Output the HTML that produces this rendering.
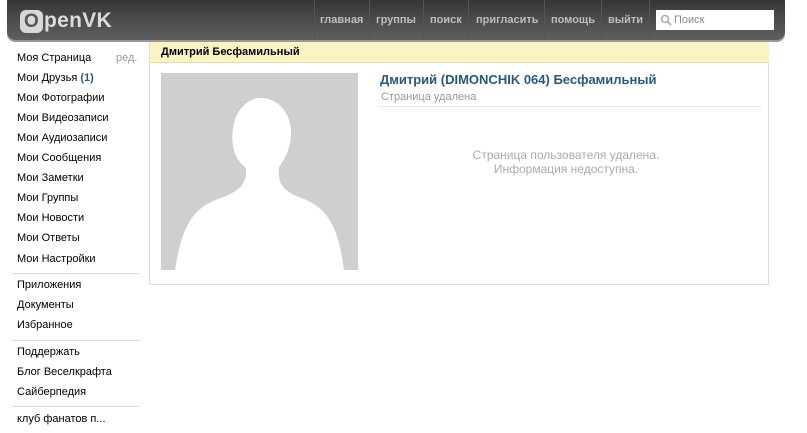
<!DOCTYPE html>
<html><head><meta charset="utf-8"><style>
body{margin:0;width:807px;height:433px;background:#fff;font-family:"Liberation Sans","DejaVu Sans",sans-serif;position:relative;overflow:hidden}
.hdr{position:absolute;left:7px;top:-5px;width:778px;height:45px;border-radius:0 0 8px 8px;background:linear-gradient(#2e2e2e,#4a4a4a 50%,#5e5e5e);box-shadow:0 2px 0 #9a9a9a}
.logo{position:absolute;left:13px;top:10px;color:#dcdcdc;font-weight:bold;font-size:21px;letter-spacing:0.3px}
.logo b{display:inline-block;background:#d8d8d8;color:#555;border-radius:6px;width:23px;height:23px;text-align:center;line-height:23px;font-size:19px;margin-right:1px}
.nav{position:absolute;top:0;height:40px;line-height:41px;font-size:11px;font-weight:bold;color:#bdbdbd}
.sep{position:absolute;top:0;width:1px;height:40px;background:#555}
.srch{position:absolute;left:656px;top:10px;width:118px;height:20px;background:#fff;font-size:11px;color:#888;line-height:20px}
.menu a{position:absolute;left:17px;font-size:11px;color:#000;text-decoration:none}
.hr{position:absolute;left:11px;width:129px;height:1px;background:#ddd}
.box{position:absolute;left:149px;top:42px;width:620px;height:243px;border:1px solid #d5dde6;border-top:none;box-sizing:border-box}
.bh{position:absolute;left:150px;top:42px;width:619px;height:21px;background:#fcf3c5;border-bottom:1px solid #e8dfa8;box-sizing:border-box;font-size:11px;font-weight:bold;padding:4px 11px}
</style></head><body>
<div class="hdr">
<div class="logo" style="top:14px"><b>O</b>penVK</div>
</div>
<div class="sep" style="left:314px"></div>
<div class="nav" style="left:320px">главная</div>
<div class="sep" style="left:369px"></div>
<div class="nav" style="left:376px">группы</div>
<div class="sep" style="left:423px"></div>
<div class="nav" style="left:430px">поиск</div>
<div class="sep" style="left:468px"></div>
<div class="nav" style="left:476px">пригласить</div>
<div class="sep" style="left:544px"></div>
<div class="nav" style="left:551px">помощь</div>
<div class="sep" style="left:601px"></div>
<div class="nav" style="left:608px">выйти</div>
<div class="sep" style="left:649px"></div>
<div class="srch"><svg width="12" height="12" style="position:absolute;left:4px;top:4px"><circle cx="5" cy="5" r="3.5" fill="none" stroke="#aaa" stroke-width="1.5"/><line x1="7.5" y1="7.5" x2="11" y2="11" stroke="#aaa" stroke-width="1.8"/></svg><span style="position:absolute;left:18px">Поиск</span></div>

<div class="menu">
<a style="top:52px">Моя Страница</a><a style="top:52px;left:116px;color:#999">ред.</a>
<a style="top:72px">Мои Друзья <span style="color:#2b587a;font-weight:bold">(1)</span></a>
<a style="top:92px">Мои Фотографии</a>
<a style="top:112px">Мои Видеозаписи</a>
<a style="top:132px">Мои Аудиозаписи</a>
<a style="top:152px">Мои Сообщения</a>
<a style="top:172px">Мои Заметки</a>
<a style="top:192px">Мои Группы</a>
<a style="top:212px">Мои Новости</a>
<a style="top:232px">Мои Ответы</a>
<a style="top:253px">Мои Настройки</a>
<div class="hr" style="top:273px"></div>
<a style="top:279px">Приложения</a>
<a style="top:299px">Документы</a>
<a style="top:319px">Избранное</a>
<div class="hr" style="top:340px"></div>
<a style="top:346px">Поддержать</a>
<a style="top:366px">Блог Веселкрафта</a>
<a style="top:386px">Сайберпедия</a>
<div class="hr" style="top:406px"></div>
<a style="top:413px">клуб фанатов п...</a>
</div>

<div class="box"></div>
<div class="bh">Дмитрий Бесфамильный</div>
<svg style="position:absolute;left:161px;top:73px" width="197" height="197" viewBox="0 0 197 197">
<rect width="197" height="197" fill="#cfcfcf"/>
<path d="M14 197 C20 160 28 135 60 125 C78 118 86 112 85 95 C72 85 70 70 72 55 C75 35 88 25 100 25 C115 25 130 38 130 60 C130 75 124 86 118 94 C116 110 122 118 140 125 C170 135 178 160 183 197 Z" fill="#fff"/>
</svg>
<div style="position:absolute;left:380px;top:72px;font-size:13px;font-weight:bold;color:#2b587a">Дмитрий (DIMONCHIK 064) Бесфамильный</div>
<div style="position:absolute;left:381px;top:91px;font-size:11px;color:#999">Страница удалена</div>
<div style="position:absolute;left:378px;top:106px;width:384px;height:1px;background:#e3e8ee"></div>
<div style="position:absolute;left:380px;top:148px;width:372px;text-align:center;font-size:12px;color:#aaa;line-height:14px">Страница пользователя удалена.<br>Информация недоступна.</div>
</body></html>
